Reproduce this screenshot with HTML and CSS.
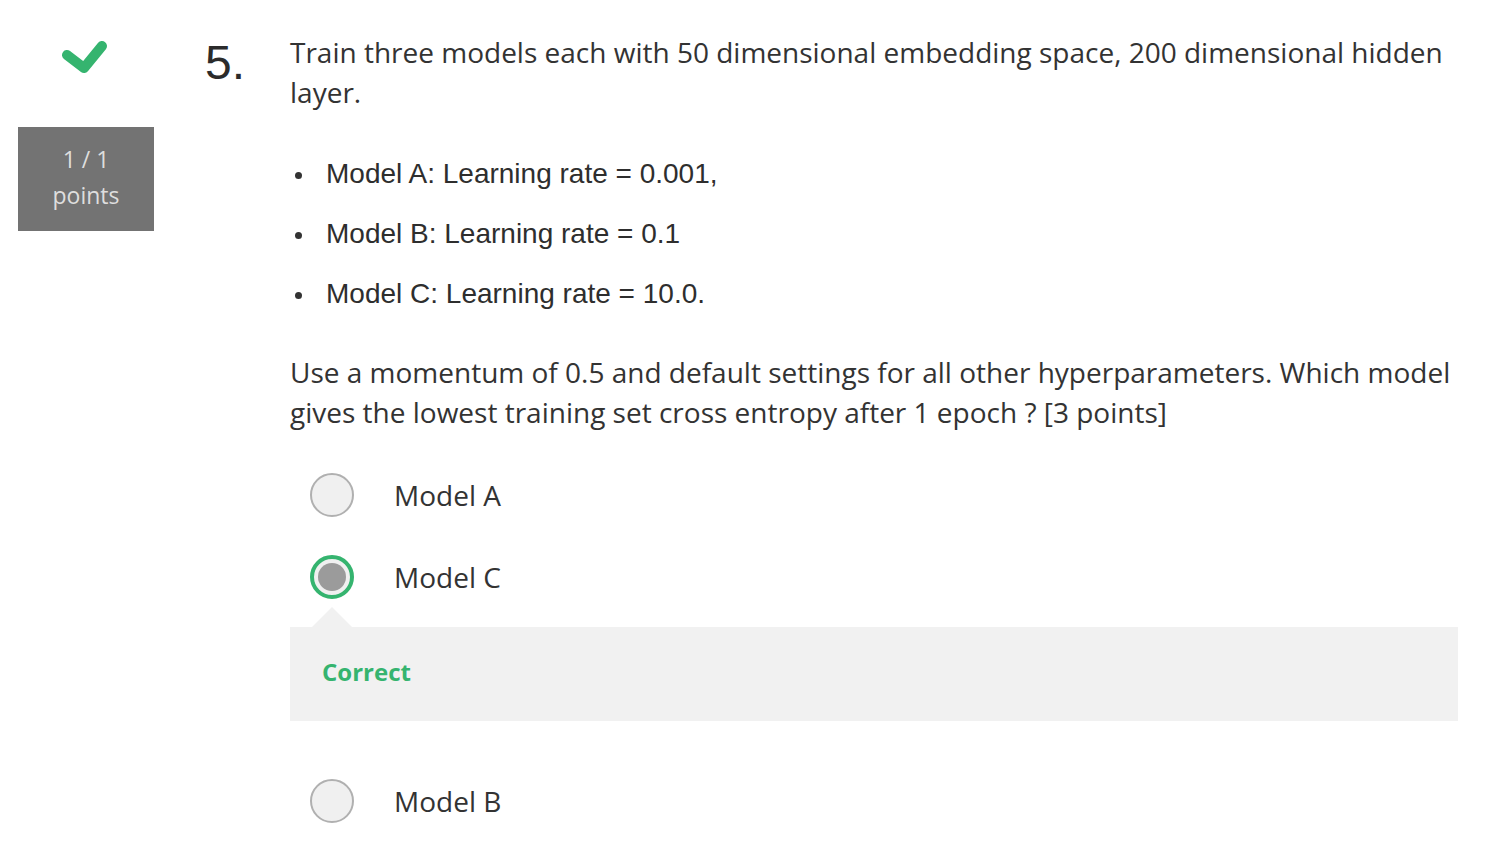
FILE: index.html
```html
<!DOCTYPE html>
<html lang="en">
<head>
<meta charset="utf-8">
<title>Quiz question 5</title>
<link rel="stylesheet" href="styles.css">
</head>
<body>
<div class="question">
  <div class="status">
    <svg class="check" width="50" height="40" viewBox="0 0 50 40" aria-hidden="true">
      <polyline points="6,17 23,30 41,8" fill="none" stroke="#35b46f" stroke-width="10" stroke-linejoin="round" stroke-linecap="round"/>
    </svg>
    <div class="points">1 / 1<br>points</div>
  </div>
  <div class="number">5.</div>
  <div class="body">
    <p class="prompt">Train three models each with 50 dimensional embedding space, 200 dimensional hidden layer.</p>
    <ul class="models">
      <li>Model A: Learning rate = 0.001,</li>
      <li>Model B: Learning rate = 0.1</li>
      <li>Model C: Learning rate = 10.0.</li>
    </ul>
    <p class="prompt para">Use a momentum of 0.5 and default settings for all other hyperparameters. Which model gives the lowest training set cross entropy after 1 epoch ? [3 points]</p>
    <div class="options">
      <div class="option"><span class="radio"></span><span class="label">Model A</span></div>
      <div class="option selected"><span class="radio"><span class="dot"></span></span><span class="label">Model C</span></div>
      <div class="feedback">Correct</div>
      <div class="option last"><span class="radio"></span><span class="label">Model B</span></div>
    </div>
  </div>
</div>
</body>
</html>
```

FILE: styles.css
```css
html, body {
  margin: 0;
  padding: 0;
  background: #ffffff;
}

body {
  font-family: "Open Sans", "Liberation Sans", sans-serif;
  color: #333333;
}

.question {
  display: flex;
  align-items: flex-start;
  padding-top: 32px;
}

.status {
  width: 136px;
  margin-left: 18px;
  display: flex;
  flex-direction: column;
  align-items: center;
}

.check {
  display: block;
  margin-top: 6px;
  margin-left: -1px;
}

.points {
  margin-top: 49px;
  width: 136px;
  box-sizing: border-box;
  padding: 14px 0 18px;
  background: #737373;
  color: #dedede;
  font-size: 23px;
  line-height: 36px;
  text-align: center;
}

.number {
  width: 85px;
  margin-left: 51px;
  margin-top: 7px;
  font-family: "Liberation Sans", Arial, sans-serif;
  font-size: 48px;
  line-height: 48px;
  color: #2b2b2b;
}

.body {
  width: 1168px;
}

.prompt {
  margin: 0;
  font-size: 28px;
  line-height: 40px;
}

.models {
  list-style: none;
  margin: 42px 0 0 0;
  padding: 0;
  font-family: "Liberation Sans", Arial, sans-serif;
  font-size: 28px;
  line-height: 40px;
  color: #2e2e2e;
}

.models li {
  display: flex;
  align-items: center;
  margin-bottom: 20px;
}

.models li:last-child {
  margin-bottom: 0;
}

.models li::before {
  content: "";
  width: 7px;
  height: 7px;
  border-radius: 50%;
  background: #333333;
  margin-left: 5px;
  margin-right: 24px;
  margin-top: 3px;
  flex: none;
}

.para {
  margin-top: 38px;
}

.options {
  margin-top: 41px;
}

.option {
  display: flex;
  align-items: center;
  height: 44px;
  margin-bottom: 38px;
}

.option.selected {
  margin-bottom: 28px;
}

.option.last {
  margin-top: 58px;
  margin-bottom: 0;
}

.radio {
  width: 44px;
  height: 44px;
  box-sizing: border-box;
  margin-left: 20px;
  margin-right: 40px;
  border: 2px solid #b0b0b0;
  border-radius: 50%;
  background: #f0f0f0;
  display: flex;
  align-items: center;
  justify-content: center;
  flex: none;
}

.selected .radio {
  border: 4px solid #35b46f;
}

.dot {
  width: 28px;
  height: 28px;
  border-radius: 50%;
  background: #9b9b9b;
}

.label {
  font-size: 28px;
  line-height: 44px;
}

.feedback {
  position: relative;
  background: #f1f1f1;
  padding: 27px 32px 31px;
  font-size: 24px;
  line-height: 36px;
  font-weight: 700;
  color: #35b46f;
}

.feedback::before {
  content: "";
  position: absolute;
  top: -20px;
  left: 22px;
  width: 0;
  height: 0;
  border-left: 20px solid transparent;
  border-right: 20px solid transparent;
  border-bottom: 20px solid #f1f1f1;
}
```
